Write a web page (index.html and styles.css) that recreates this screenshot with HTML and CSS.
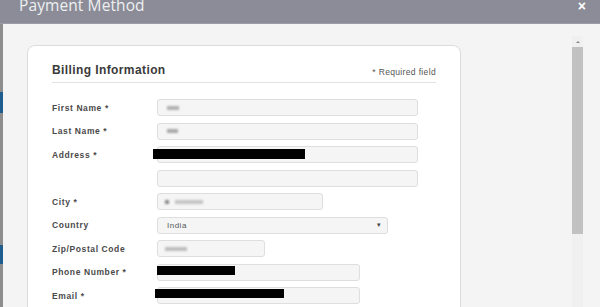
FILE: index.html
```html
<!DOCTYPE html>
<html>
<head>
<meta charset="utf-8">
<link rel="stylesheet" href="styles.css">
</head>
<body>
<div class="modal">
  <div class="modal-header">
    <span class="modal-title">Payment Method</span>
    <span class="close">&times;</span>
  </div>
  <div class="modal-body">
    <div class="behind"></div>
    <div class="content">
      <div class="card">
        <div class="card-head">
          <h2 class="card-title">Billing Information</h2>
          <span class="req">* Required field</span>
        </div>
        <div class="form">
          <div class="row">
            <label class="lbl">First Name *</label>
            <div class="field w-full"><span class="blur b1"></span></div>
          </div>
          <div class="row">
            <label class="lbl">Last Name *</label>
            <div class="field w-full"><span class="blur b2"></span></div>
          </div>
          <div class="row">
            <label class="lbl">Address *</label>
            <div class="field w-full"><span class="redact r-addr"></span></div>
          </div>
          <div class="row">
            <label class="lbl"></label>
            <div class="field w-full"></div>
          </div>
          <div class="row">
            <label class="lbl">City *</label>
            <div class="field w-city"><span class="blur b3"></span><span class="blur b4"></span></div>
          </div>
          <div class="row">
            <label class="lbl">Country</label>
            <div class="field w-country select"><span class="val">India</span><span class="caret">&#9662;</span></div>
          </div>
          <div class="row">
            <label class="lbl">Zip/Postal Code</label>
            <div class="field w-zip"><span class="blur b5"></span></div>
          </div>
          <div class="row">
            <label class="lbl">Phone Number *</label>
            <div class="field w-phone"><span class="redact r-phone"></span></div>
          </div>
          <div class="row">
            <label class="lbl">Email *</label>
            <div class="field w-phone"><span class="redact r-email"></span></div>
          </div>
        </div>
      </div>
    </div>
    <div class="scroll">
      <div class="arrow"></div>
      <div class="thumb"></div>
    </div>
  </div>
</div>
</body>
</html>
```
FILE: styles.css
```css
* { box-sizing: border-box; }
html, body {
  margin: 0;
  padding: 0;
  width: 600px;
  height: 307px;
  overflow: hidden;
  background: #f4f4f4;
  font-family: "Liberation Sans", Arial, sans-serif;
}
.modal {
  width: 600px;
  height: 307px;
  display: flex;
  flex-direction: column;
  overflow: hidden;
}
.modal-header {
  height: 24px;
  flex: none;
  background: #8b8c97;
  display: flex;
  justify-content: space-between;
  align-items: flex-start;
  padding: 0 14px 0 19px;
  border-bottom: 1px solid #9a9ba4;
}
.modal-title {
  font-family: "Open Sans", sans-serif;
  font-size: 15.5px;
  line-height: 12px;
  color: #eef0f2;
  margin-top: -1px;
  letter-spacing: 0.1px;
}
.close {
  color: #ffffff;
  font-weight: bold;
  font-size: 14px;
  line-height: 10px;
  margin-top: 1px;
}
.modal-body {
  flex: 1;
  display: flex;
  min-height: 0;
  overflow: hidden;
}
.behind {
  width: 3px;
  flex: none;
  background: linear-gradient(#8d8d8d 0, #8d8d8d 68px, #1e5d8e 68px, #1e5d8e 89px, #8d8d8d 89px, #8d8d8d 221px, #1e5d8e 221px, #1e5d8e 240px, #8d8d8d 240px);
}
.content {
  flex: 1;
  padding: 21px 0 0 24px;
  overflow: hidden;
}
.card {
  width: 434px;
  height: 300px;
  background: #ffffff;
  border: 1px solid #dcdcdc;
  border-radius: 8px;
  padding: 17px 24px 0 24px;
}
.card-head {
  display: flex;
  justify-content: space-between;
  align-items: flex-end;
  border-bottom: 1px solid #e3e3e3;
  padding-bottom: 5px;
}
.card-title {
  margin: 0;
  font-size: 12px;
  line-height: 14px;
  font-weight: bold;
  color: #3a3a3a;
  letter-spacing: 0.4px;
}
.req {
  font-size: 8.5px;
  color: #555;
  letter-spacing: 0.35px;
}
.form {
  padding-top: 16px;
  display: flex;
  flex-direction: column;
  gap: 6.5px;
}
.row {
  display: flex;
  align-items: center;
}
.lbl {
  width: 105px;
  flex: none;
  font-size: 8.5px;
  font-weight: bold;
  color: #4a4a4a;
  letter-spacing: 0.6px;
}
.field {
  height: 17px;
  background: #f5f5f5;
  border: 1px solid #dedede;
  border-radius: 3px;
  display: flex;
  align-items: center;
  padding: 0 9px;
  position: relative;
  font-size: 8px;
  color: #555;
}
.w-full { width: 261px; }
.w-city { width: 166px; }
.w-country { width: 231px; }
.w-zip { width: 108px; }
.w-phone { width: 203px; }
.select { justify-content: space-between; }
.val { letter-spacing: 0.5px; }
.caret { font-size: 7px; color: #444; margin-right: -3px; }
.blur {
  display: inline-block;
  height: 4px;
  background: #b0b0b0;
  filter: blur(0.8px);
}
.b1 { width: 12px; }
.b2 { width: 11px; background: #a8a8a8; }
.b3 { width: 4px; margin-left: -2px; background: #888; }
.b4 { width: 28px; margin-left: 6px; background: #c4c4c4; }
.b5 { width: 22px; margin-left: -2px; background: #bdbdbd; }
.redact {
  position: absolute;
  background: #000;
  display: block;
}
.r-addr { left: -5px; top: 2px; width: 152px; height: 10px; }
.r-phone { left: -1px; top: 1px; width: 78px; height: 9px; }
.r-email { left: -3px; top: 1px; width: 129px; height: 9px; }
.scroll {
  width: 11px;
  flex: none;
  margin: 12px 17px 0 0;
  background: #f0f0f0;
  display: flex;
  flex-direction: column;
  align-items: center;
}
.arrow {
  width: 0;
  height: 0;
  margin-top: 5px;
  border-left: 2px solid transparent;
  border-right: 2px solid transparent;
  border-bottom: 2px solid #888;
}
.thumb {
  width: 11px;
  height: 187px;
  margin-top: 4px;
  background: #c1c1c1;
}
```
